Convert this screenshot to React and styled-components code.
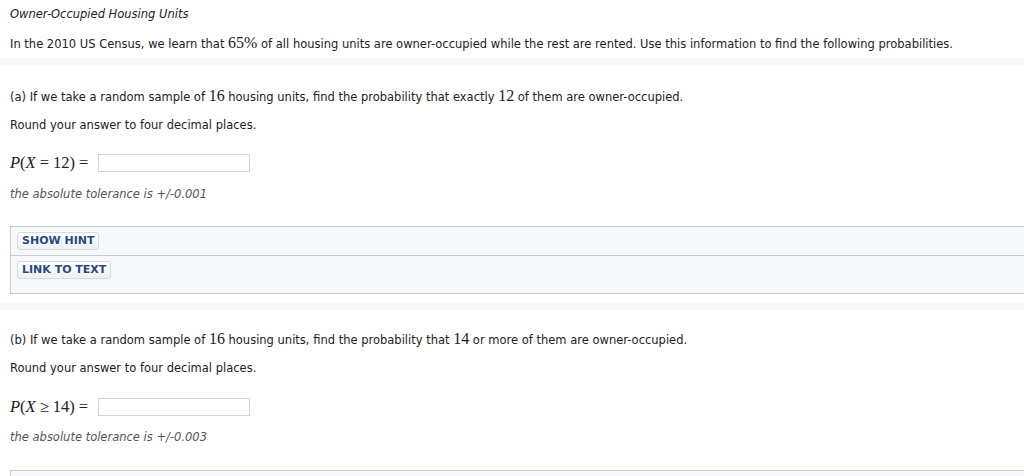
import React from "react";
import styled, { createGlobalStyle } from "styled-components";

const Global = createGlobalStyle`
  html, body { margin: 0; padding: 0; background: #fff; }
  body { font-family: "DejaVu Sans", Verdana, sans-serif; font-size: 11.5px; color: #222; overflow: hidden; }
`;

const Page = styled.div`
  width: 1024px;
  height: 476px;
  overflow: hidden;
`;

const Crumb = styled.div`
  height: 3px;
  overflow: hidden;
  padding-left: 10px;
  span {
    display: block;
    margin-top: -12px;
    color: #e0701e;
    font-size: 11px;
    line-height: 14px;
  }
`;

const Title = styled.div`
  padding: 3px 10px 0;
  line-height: 16px;
  font-style: italic;
`;

const Para = styled.p`
  margin: ${(p) => p.$mt || 0}px 0 0;
  padding: 0 10px;
  line-height: 16px;
  height: 16px;
  white-space: nowrap;
`;

const Num = styled.span`
  font-family: "Liberation Serif", "Times New Roman", serif;
  font-size: 16px;
  line-height: 16px;
`;

const Band = styled.div`
  margin-top: ${(p) => p.$mt || 0}px;
  height: 7px;
  background: #f6f7f9;
`;

const AnswerRow = styled.div`
  margin-top: ${(p) => p.$mt || 0}px;
  padding-left: 10px;
  display: flex;
  align-items: center;
  height: 18px;
  gap: 6px;
`;

const MathExpr = styled.span`
  font-family: "Liberation Serif", "Times New Roman", serif;
  font-size: 16.5px;
  line-height: 18px;
  white-space: pre;
  i { font-style: italic; }
`;

const Rel = styled.span`
  padding: 0 4px;
`;

const Input = styled.input`
  box-sizing: border-box;
  width: 152px;
  height: 18px;
  border: 1px solid #d4d4d4;
  margin: 0;
  padding: 0 3px;
  background: #fff;
`;

const Tolerance = styled.p`
  margin: ${(p) => p.$mt || 0}px 0 0;
  padding: 0 10px;
  line-height: 16px;
  font-style: italic;
  color: #555;
`;

const Panel = styled.div`
  margin: ${(p) => p.$mt || 0}px 0 0 10px;
  border: 1px solid #c6cdda;
  border-right: none;
  background: #f7f8fa;
`;

const PanelRow = styled.div`
  padding: 5px 6px ${(p) => p.$pb || 6}px;
  min-height: 18px;
  & + & { border-top: 1px solid #c6cdda; }
`;

const Button = styled.button`
  box-sizing: border-box;
  height: 18px;
  padding: 0 4px;
  border: 1px solid #d6dbe2;
  border-radius: 3px;
  background: linear-gradient(#ffffff, #edf0f4);
  color: #2a4a7f;
  font-family: "DejaVu Sans", Verdana, sans-serif;
  font-size: 11px;
  font-weight: bold;
  line-height: 16px;
  cursor: pointer;
  display: block;
`;

export default function App() {
  return (
    <Page>
      <Global />
      <Crumb><span>Chapter 5, Section 5.2, Exercise 031</span></Crumb>
      <Title>Owner-Occupied Housing Units</Title>
      <Para $mt={13}>
        In the 2010 US Census, we learn that <Num>65%</Num> of all housing units are owner-occupied while the rest are rented. Use this information to find the following probabilities.
      </Para>
      <Band $mt={7} />

      <Para $mt={23}>
        (a) If we take a random sample of <Num>16</Num> housing units, find the probability that exactly <Num>12</Num> of them are owner-occupied.
      </Para>
      <Para $mt={13}>Round your answer to four decimal places.</Para>
      <AnswerRow $mt={21}>
        <MathExpr><i>P</i>(<i>X</i><Rel>=</Rel>12)<Rel>=</Rel></MathExpr>
        <Input type="text" />
      </AnswerRow>
      <Tolerance $mt={14}>the absolute tolerance is +/-0.001</Tolerance>
      <Panel $mt={24}>
        <PanelRow $pb={5}><Button>SHOW HINT</Button></PanelRow>
        <PanelRow $pb={14}><Button>LINK TO TEXT</Button></PanelRow>
      </Panel>
      <Band $mt={9} />

      <Para $mt={21}>
        (b) If we take a random sample of <Num>16</Num> housing units, find the probability that <Num>14</Num> or more of them are owner-occupied.
      </Para>
      <Para $mt={13}>Round your answer to four decimal places.</Para>
      <AnswerRow $mt={22}>
        <MathExpr><i>P</i>(<i>X</i><Rel>≥</Rel>14)<Rel>=</Rel></MathExpr>
        <Input type="text" />
      </AnswerRow>
      <Tolerance $mt={13}>the absolute tolerance is +/-0.003</Tolerance>
      <Panel $mt={25}>
        <PanelRow />
      </Panel>
    </Page>
  );
}
